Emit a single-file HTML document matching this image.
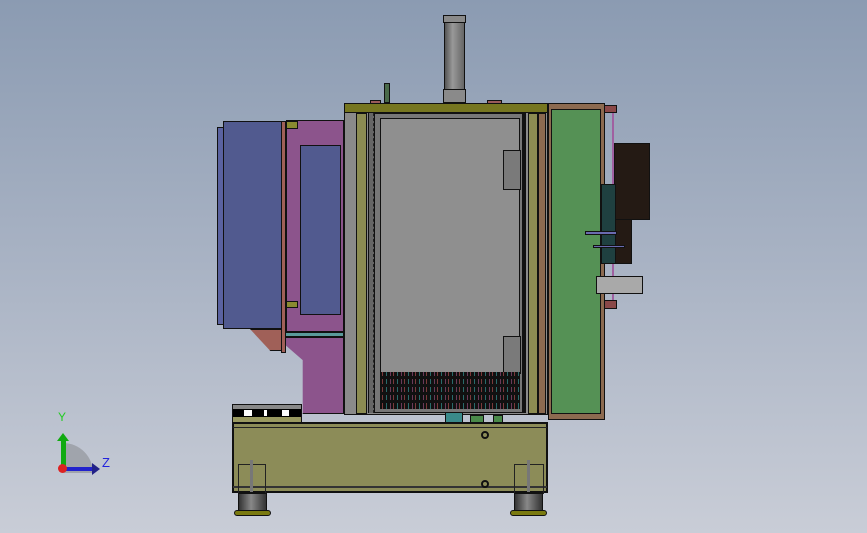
<!DOCTYPE html>
<html><head><style>
body{margin:0;width:867px;height:533px;overflow:hidden;background:linear-gradient(#8b9bb2 0%,#a9b3c4 50%,#c9cdd7 100%);position:relative;font-family:"Liberation Sans",sans-serif}
div{position:absolute;box-sizing:border-box}
.k{border:1px solid #111}
</style></head><body>
<!-- cylinder -->
<div class="k" style="left:443px;top:15px;width:23px;height:8px;background:#8a8a8a"></div>
<div class="k" style="left:444px;top:22px;width:21px;height:68px;background:linear-gradient(90deg,#555,#999 40%,#666)"></div>
<div class="k" style="left:443px;top:89px;width:23px;height:14px;background:#8a8a8a"></div>
<div style="left:384px;top:83px;width:6px;height:20px;background:#4a6a4a;border:1px solid #111"></div>
<div class="k" style="left:370px;top:100px;width:11px;height:4px;background:#9a5a5a"></div>
<div class="k" style="left:487px;top:100px;width:15px;height:4px;background:#9a5a5a"></div>
<!-- left blue box -->
<div class="k" style="left:217px;top:127px;width:7px;height:198px;background:#5a62a0"></div>
<div class="k" style="left:223px;top:121px;width:60px;height:208px;background:#515a8f"></div>
<div class="k" style="left:250px;top:329px;width:34px;height:22px;background:#a06058;clip-path:polygon(0 0,100% 0,100% 100%,60% 100%)"></div>
<div class="k" style="left:281px;top:121px;width:5px;height:232px;background:#a06058"></div>
<!-- magenta -->
<div class="k" style="left:286px;top:120px;width:58px;height:212px;background:#8c548c"></div>
<div class="k" style="left:300px;top:145px;width:41px;height:170px;background:#515a8f"></div>
<div style="left:286px;top:121px;width:12px;height:8px;background:#8a8a30;border:1px solid #111"></div>
<div style="left:286px;top:301px;width:12px;height:7px;background:#8a8a30;border:1px solid #111"></div>
<div class="k" style="left:285px;top:332px;width:59px;height:5px;background:#5a9a9a"></div>
<div class="k" style="left:285px;top:337px;width:59px;height:77px;background:#8c548c;clip-path:polygon(0 0,100% 0,100% 100%,30% 100%,30% 30%,0 10%)"></div>
<!-- left small block -->
<div class="k" style="left:232px;top:404px;width:70px;height:20px;background:#888"></div>
<div style="left:233px;top:409px;width:68px;height:8px;background:#000"></div>
<div style="left:244px;top:410px;width:8px;height:6px;background:#fff"></div>
<div style="left:264px;top:410px;width:3px;height:6px;background:#fff"></div>
<div style="left:282px;top:410px;width:7px;height:6px;background:#fff"></div>
<div style="left:233px;top:417px;width:68px;height:6px;background:#999960"></div>
<!-- cabinet -->
<div class="k" style="left:344px;top:103px;width:204px;height:10px;background:#767620"></div>
<div class="k" style="left:344px;top:112px;width:204px;height:303px;background:#8a8a8a"></div>
<div class="k" style="left:356px;top:113px;width:11px;height:301px;background:#8c8c52"></div>
<div class="k" style="left:528px;top:113px;width:10px;height:301px;background:#8c8c52"></div>
<div class="k" style="left:538px;top:113px;width:8px;height:301px;background:#8c6a50"></div>
<div style="left:368px;top:113px;width:6px;height:300px;background:#666;border-left:1px solid #111;border-right:1px dashed #222"></div>
<div style="left:374px;top:113px;width:151px;height:300px;background:#777;border:1px solid #111"></div>
<div class="k" style="left:380px;top:118px;width:140px;height:260px;background:#8f8f8f"></div>
<div class="k" style="left:503px;top:150px;width:18px;height:40px;background:#7a7a7a"></div>
<div class="k" style="left:503px;top:336px;width:18px;height:38px;background:#7a7a7a"></div>
<div style="left:522px;top:113px;width:4px;height:300px;background:#111"></div>
<div style="left:380px;top:372px;width:140px;height:37px;background:repeating-linear-gradient(90deg,#111 0 2px,#7a3a3a 2px 3px,#111 3px 6px,#2a6a6a 6px 7px,#111 7px 10px,#6a3a5a 10px 11px)"></div>
<div style="left:380px;top:376px;width:140px;height:3px;background:#111"></div>
<div style="left:380px;top:384px;width:140px;height:3px;background:#111"></div>
<div style="left:380px;top:392px;width:140px;height:3px;background:#111"></div>
<div style="left:380px;top:400px;width:140px;height:3px;background:#111"></div>
<div class="k" style="left:445px;top:412px;width:18px;height:11px;background:#3a8a8a"></div>
<div class="k" style="left:470px;top:415px;width:14px;height:8px;background:#4a8a4a"></div>
<div class="k" style="left:493px;top:415px;width:10px;height:8px;background:#4a8a4a"></div>
<!-- door -->
<div class="k" style="left:548px;top:103px;width:57px;height:317px;background:#8c6a50"></div>
<div class="k" style="left:551px;top:109px;width:50px;height:305px;background:#559155"></div>
<div class="k" style="left:604px;top:105px;width:13px;height:8px;background:#8a4848"></div>
<div class="k" style="left:604px;top:300px;width:13px;height:9px;background:#8a4848"></div>
<div style="left:612px;top:113px;width:2px;height:187px;background:#a060a0"></div>
<div class="k" style="left:614px;top:143px;width:36px;height:77px;background:#241a14"></div>
<div class="k" style="left:614px;top:219px;width:18px;height:45px;background:#241a14"></div>
<div class="k" style="left:601px;top:184px;width:15px;height:80px;background:#1f4040"></div>
<div class="k" style="left:585px;top:231px;width:32px;height:4px;background:#6a6ab0"></div>
<div class="k" style="left:593px;top:245px;width:32px;height:3px;background:#6a6ab0"></div>
<div class="k" style="left:596px;top:276px;width:47px;height:18px;background:#a9a9a9"></div>
<!-- base -->
<div class="k" style="left:232px;top:422px;width:316px;height:71px;background:#8c8c58;border-width:2px"></div>
<div style="left:233px;top:427px;width:314px;height:1px;background:#222"></div>
<div style="left:233px;top:486px;width:314px;height:2px;background:#333"></div>
<div style="left:481px;top:431px;width:8px;height:8px;border:2px solid #111;border-radius:50%"></div>
<div style="left:481px;top:480px;width:8px;height:8px;border:2px solid #111;border-radius:50%"></div>
<div style="left:238px;top:464px;width:28px;height:30px;border:1px solid #222"></div>
<div style="left:250px;top:460px;width:3px;height:32px;background:#777"></div>
<div style="left:514px;top:464px;width:30px;height:30px;border:1px solid #222"></div>
<div style="left:527px;top:460px;width:3px;height:32px;background:#777"></div>
<div style="left:238px;top:493px;width:29px;height:18px;background:linear-gradient(90deg,#333,#888 45%,#333);border:1px solid #111"></div>
<div style="left:234px;top:510px;width:37px;height:6px;background:#7a7a10;border:1px solid #111;border-radius:3px"></div>
<div style="left:514px;top:493px;width:29px;height:18px;background:linear-gradient(90deg,#333,#888 45%,#333);border:1px solid #111"></div>
<div style="left:510px;top:510px;width:37px;height:6px;background:#7a7a10;border:1px solid #111;border-radius:3px"></div>
<!-- triad -->
<div style="left:63px;top:443px;width:30px;height:30px;background:#a0a4ac;border-top-right-radius:30px"></div>
<div style="left:61px;top:440px;width:5px;height:29px;background:#1a1"></div>
<div style="left:57px;top:433px;width:0;height:0;border-left:6px solid transparent;border-right:6px solid transparent;border-bottom:8px solid #1a1"></div>
<div style="left:63px;top:467px;width:30px;height:4px;background:#22c"></div>
<div style="left:92px;top:463px;width:0;height:0;border-top:6px solid transparent;border-bottom:6px solid transparent;border-left:8px solid #228"></div>
<div style="left:58px;top:464px;width:9px;height:9px;background:#d22;border-radius:50%"></div>
<div style="left:58px;top:410px;color:#2c2;font-size:12px">Y</div>
<div style="left:102px;top:455px;color:#22d;font-size:13px">Z</div>
</body></html>
